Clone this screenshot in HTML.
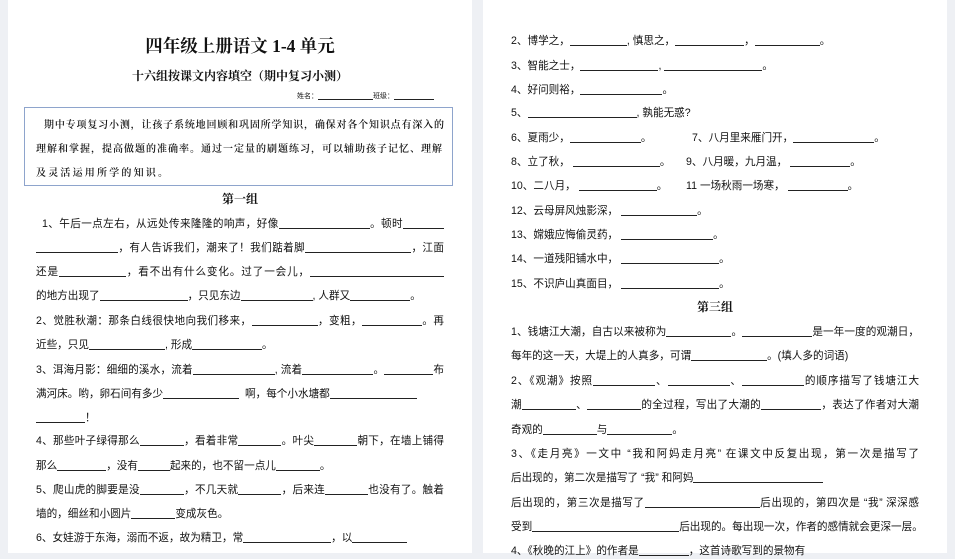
<!DOCTYPE html>
<html><head><meta charset="utf-8"><style>
*{margin:0;padding:0;box-sizing:border-box}
body{width:955px;height:553px;background:#eef0f4;position:relative;overflow:hidden;font-family:"Liberation Sans","Noto Sans CJK SC",sans-serif;color:#111}
.pg{position:absolute;top:0;height:553px;background:#fff}
.l{position:absolute;font-size:10.6px;line-height:16px;height:16px;white-space:nowrap}
.j{text-align:justify;text-align-last:justify}
b.u{display:inline-block;border-bottom:1px solid #222;height:13px;vertical-align:-2px;font-weight:normal}
.t{position:absolute;left:8px;width:464px;text-align:center;font-weight:bold;font-family:"Liberation Serif","Noto Serif CJK SC",serif}
.box{position:absolute;left:24px;top:107px;width:429px;height:79px;border:1px solid #8ea4cc}
.bt{position:absolute;font-size:10px;line-height:16px;font-family:"Liberation Serif","Noto Serif CJK SC",serif;font-weight:600;white-space:nowrap}
</style></head><body>
<div class="pg" style="left:8px;width:464px"></div>
<div class="pg" style="left:483px;width:464px"></div>

<div class="t" style="top:33px;font-size:17.5px">四年级上册语文 1-4 单元</div>
<div class="t" style="top:67px;font-size:12px">十六组按课文内容填空（期中复习小测）</div>
<div class="l" style="left:297px;top:89px;font-size:7px">姓名：<b class="u" style="width:55px;height:8px"></b>班级：<b class="u" style="width:40px;height:8px"></b></div>
<div class="box"></div>
<div class="bt j" style="left:44px;top:118px;width:400px">期中专项复习小测，让孩子系统地回顾和巩固所学知识，确保对各个知识点有深入的</div>
<div class="bt j" style="left:36px;top:142px;width:406px">理解和掌握，提高做题的准确率。通过一定量的刷题练习，可以辅助孩子记忆、理解</div>
<div class="bt" style="left:36px;top:166px;letter-spacing:2.2px">及灵活运用所学的知识。</div>
<div class="t" style="top:190px;font-size:12px">第一组</div>

<div class="l j" style="left:42px;top:216px;width:402px">1、午后一点左右，从远处传来隆隆的响声，好像<b class="u" style="width:91px"></b>。顿时<b class="u" style="width:41px"></b></div>
<div class="l j" style="left:36px;top:240px;width:408px"><b class="u" style="width:82px"></b>，有人告诉我们，潮来了！我们踮着脚<b class="u" style="width:106px"></b>，江面</div>
<div class="l j" style="left:36px;top:264px;width:408px">还是<b class="u" style="width:67px"></b>，看不出有什么变化。过了一会儿，<b class="u" style="width:134px"></b></div>
<div class="l" style="left:36px;top:288px">的地方出现了<b class="u" style="width:88px"></b>，只见东边<b class="u" style="width:72px"></b>, 人群又<b class="u" style="width:60px"></b>。</div>
<div class="l j" style="left:36px;top:313px;width:408px">2、觉胜秋潮：那条白线很快地向我们移来，<b class="u" style="width:66px"></b>，变粗，<b class="u" style="width:60px"></b>。再</div>
<div class="l" style="left:36px;top:337px">近些，只见<b class="u" style="width:76px"></b>, 形成<b class="u" style="width:70px"></b>。</div>
<div class="l j" style="left:36px;top:362px;width:408px">3、洱海月影：细细的溪水，流着<b class="u" style="width:82px"></b>, 流着<b class="u" style="width:71px"></b>。<b class="u" style="width:49px"></b>布</div>
<div class="l" style="left:36px;top:386px">满河床。哟，卵石间有多少<b class="u" style="width:76px"></b>&nbsp; 啊，每个小水塘都<b class="u" style="width:87px"></b></div>
<div class="l" style="left:36px;top:410px"><b class="u" style="width:49px"></b>！</div>
<div class="l j" style="left:36px;top:433px;width:408px">4、那些叶子绿得那么<b class="u" style="width:44px"></b>，看着非常<b class="u" style="width:43px"></b>。叶尖<b class="u" style="width:43px"></b>朝下，在墙上铺得</div>
<div class="l" style="left:36px;top:458px">那么<b class="u" style="width:49px"></b>，没有<b class="u" style="width:32px"></b>起来的，也不留一点儿<b class="u" style="width:44px"></b>。</div>
<div class="l j" style="left:36px;top:482px;width:408px">5、爬山虎的脚要是没<b class="u" style="width:44px"></b>，不几天就<b class="u" style="width:43px"></b>，后来连<b class="u" style="width:43px"></b>也没有了。触着</div>
<div class="l" style="left:36px;top:506px">墙的，细丝和小圆片<b class="u" style="width:44px"></b>变成灰色。</div>
<div class="l" style="left:36px;top:530px">6、女娃游于东海，溺而不返，故为精卫，常<b class="u" style="width:88px"></b>，以<b class="u" style="width:55px"></b></div>

<div class="l" style="left:511px;top:33px">2、博学之，<b class="u" style="width:57px"></b>, 慎思之，<b class="u" style="width:69px"></b>，<b class="u" style="width:65px"></b>。</div>
<div class="l" style="left:511px;top:58px">3、智能之士，<b class="u" style="width:78px"></b>, <b class="u" style="width:98px"></b>。</div>
<div class="l" style="left:511px;top:82px">4、好问则裕，<b class="u" style="width:82px"></b>。</div>
<div class="l" style="left:511px;top:105px">5、<b class="u" style="width:109px"></b>, 孰能无惑?</div>
<div class="l" style="left:511px;top:130px">6、夏雨少，<b class="u" style="width:71px"></b>。</div>
<div class="l" style="left:692px;top:130px">7、八月里来雁门开，<b class="u" style="width:81px"></b>。</div>
<div class="l" style="left:511px;top:154px">8、立了秋，&nbsp;<b class="u" style="width:87px"></b>。</div>
<div class="l" style="left:686px;top:154px">9、八月暖，九月温，&nbsp;<b class="u" style="width:60px"></b>。</div>
<div class="l" style="left:511px;top:178px">10、二八月，&nbsp;<b class="u" style="width:78px"></b>。</div>
<div class="l" style="left:686px;top:178px">11 一场秋雨一场寒，&nbsp;<b class="u" style="width:60px"></b>。</div>
<div class="l" style="left:511px;top:203px">12、云母屏风烛影深，&nbsp;<b class="u" style="width:76px"></b>。</div>
<div class="l" style="left:511px;top:227px">13、嫦娥应悔偷灵药，&nbsp;<b class="u" style="width:92px"></b>。</div>
<div class="l" style="left:511px;top:251px">14、一道残阳铺水中，&nbsp;<b class="u" style="width:98px"></b>。</div>
<div class="l" style="left:511px;top:276px">15、不识庐山真面目，&nbsp;<b class="u" style="width:98px"></b>。</div>
<div class="t" style="left:483px;top:298px;font-size:12px">第三组</div>
<div class="l j" style="left:511px;top:324px;width:408px">1、钱塘江大潮，自古以来被称为<b class="u" style="width:65px"></b>。<b class="u" style="width:70px"></b>是一年一度的观潮日，</div>
<div class="l" style="left:511px;top:348px">每年的这一天，大堤上的人真多，可谓<b class="u" style="width:76px"></b>。(填人多的词语)</div>
<div class="l j" style="left:511px;top:373px;width:408px">2、《观潮》按照<b class="u" style="width:62px"></b>、<b class="u" style="width:62px"></b>、<b class="u" style="width:62px"></b>的顺序描写了钱塘江大</div>
<div class="l j" style="left:511px;top:397px;width:408px">潮<b class="u" style="width:54px"></b>、<b class="u" style="width:54px"></b>的全过程，写出了大潮的<b class="u" style="width:60px"></b>，表达了作者对大潮</div>
<div class="l" style="left:511px;top:422px">奇观的<b class="u" style="width:54px"></b>与<b class="u" style="width:65px"></b>。</div>
<div class="l j" style="left:511px;top:446px;width:408px">3、《走月亮》一文中 “我和阿妈走月亮” 在课文中反复出现，第一次是描写了</div>
<div class="l" style="left:511px;top:470px">后出现的，第二次是描写了 “我” 和阿妈<b class="u" style="width:130px"></b></div>
<div class="l j" style="left:511px;top:495px;width:408px">后出现的，第三次是描写了<b class="u" style="width:115px"></b>后出现的，第四次是 “我” 深深感</div>
<div class="l j" style="left:511px;top:519px;width:408px">受到<b class="u" style="width:147px"></b>后出现的。每出现一次，作者的感情就会更深一层。</div>
<div class="l" style="left:511px;top:543px">4、《秋晚的江上》的作者是<b class="u" style="width:50px"></b>，这首诗歌写到的景物有</div>
</body></html>
